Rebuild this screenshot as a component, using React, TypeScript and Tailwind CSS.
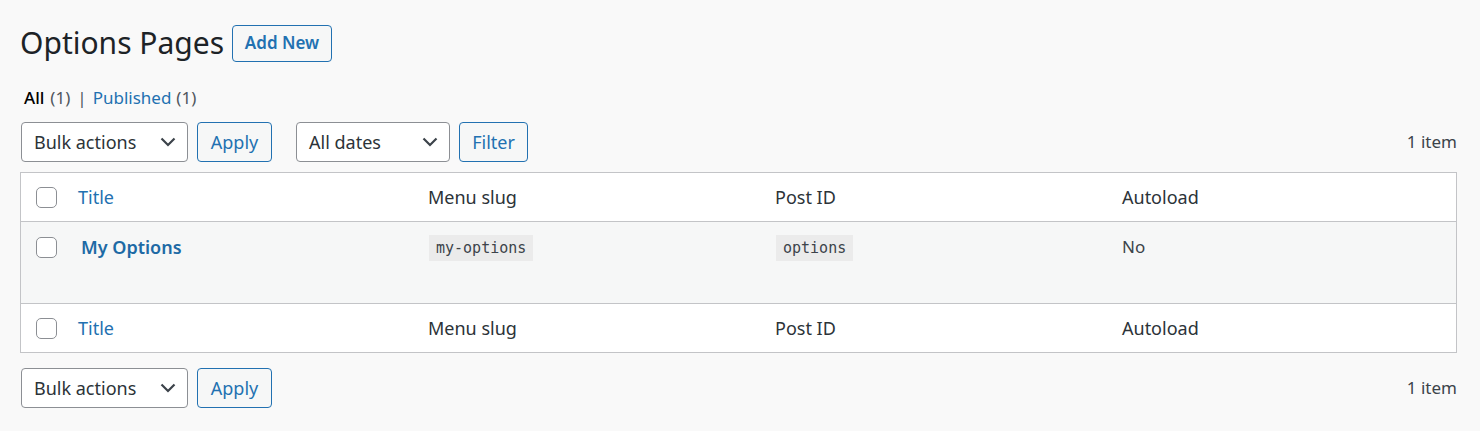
import React from "react";

function Chevron() {
  return (
    <svg width="16" height="10" viewBox="0 0 16 10" className="shrink-0">
      <path d="M1.5 1.5 L8 8 L14.5 1.5" fill="none" stroke="#3c434a" strokeWidth="2.2" />
    </svg>
  );
}

function Select({ label, width }: { label: string; width: string }) {
  return (
    <div
      className={`${width} h-[40px] flex items-center justify-between bg-white border border-[#8c8f94] rounded-[4px] pl-[12px] pr-[11px] text-[18px] text-[#2c3338]`}
    >
      <span>{label}</span>
      <Chevron />
    </div>
  );
}

function Btn({ label, width }: { label: string; width: string }) {
  return (
    <div
      className={`${width} h-[40px] flex items-center justify-center bg-[#f6f7f7] border border-[#2271b1] rounded-[4px] text-[18px] text-[#2271b1]`}
    >
      {label}
    </div>
  );
}

function Checkbox() {
  return <div className="w-[21px] h-[21px] ml-[15px] bg-white border border-[#8c8f94] rounded-[5px]" />;
}

function HeaderRow({ border }: { border: string }) {
  return (
    <div className={`grid grid-cols-[47px_350px_347px_347px_1fr] items-center text-[18px] text-[#2c3338] ${border}`}>
      <Checkbox />
      <div className="pl-[10px] text-[#2271b1]">Title</div>
      <div className="pl-[10px]">Menu slug</div>
      <div className="pl-[10px]">Post ID</div>
      <div className="pl-[10px]">Autoload</div>
    </div>
  );
}

export default function App() {
  return (
    <div className="min-h-[431px] bg-[#f9f9f9] pl-5 pr-[23px] pt-[24px] font-['Noto_Sans',sans-serif] text-[#2c3338]">
      <div className="flex items-center h-[38px] gap-[8px]">
        <h1 className="text-[30px] leading-[38px] font-normal text-[#1d2327]">Options Pages</h1>
        <div className="h-[37px] w-[100px] flex items-center justify-center border border-[#2271b1] rounded-[4px] bg-[#f6f7f7] text-[#2271b1] text-[17px] font-semibold">
          Add New
        </div>
      </div>

      <div className="mt-[23px] h-[26px] flex items-center pl-[4px] text-[17px] text-[#50575e]">
        <span className="text-black font-medium">All</span>
        <span className="ml-[6px]">(1)</span>
        <span className="ml-[7px] mr-[6px] text-[#50575e]">|</span>
        <span className="text-[#2271b1]">Published</span>
        <span className="ml-[5px]">(1)</span>
      </div>

      <div className="mt-[11px] flex items-center h-[40px]">
        <div className="ml-[1px]">
          <Select label="Bulk actions" width="w-[167px]" />
        </div>
        <div className="ml-[9px]">
          <Btn label="Apply" width="w-[75px]" />
        </div>
        <div className="ml-[24px]">
          <Select label="All dates" width="w-[154px]" />
        </div>
        <div className="ml-[9px]">
          <Btn label="Filter" width="w-[69px]" />
        </div>
        <div className="ml-auto text-[17px] text-[#3c434a]">1 item</div>
      </div>

      <div className="mt-[10px] border border-[#c3c4c7] bg-white">
        <HeaderRow border="h-[49px] border-b border-[#c3c4c7]" />
        <div className="grid grid-cols-[47px_350px_347px_347px_1fr] h-[82px] items-start bg-[#f6f7f7] border-b border-[#c3c4c7] text-[18px]">
          <div className="pt-[15px]">
            <Checkbox />
          </div>
          <div className="pl-[13px] pt-[12px] font-semibold text-[#1d6aa5]">My Options</div>
          <div className="pl-[11px] pt-[11px]">
            <span className="inline-block bg-[#ebebeb] px-[7px] h-[26px] leading-[26px] font-['DejaVu_Sans_Mono',monospace] text-[15px] text-[#3c434a]">
              my-options
            </span>
          </div>
          <div className="pl-[11px] pt-[11px]">
            <span className="inline-block bg-[#ebebeb] px-[7px] h-[26px] leading-[26px] font-['DejaVu_Sans_Mono',monospace] text-[15px] text-[#3c434a]">
              options
            </span>
          </div>
          <div className="pl-[10px] pt-[12px] text-[17px] text-[#3c434a]">No</div>
        </div>
        <HeaderRow border="h-[48px]" />
      </div>

      <div className="mt-[15px] flex items-center h-[40px]">
        <div className="ml-[1px]">
          <Select label="Bulk actions" width="w-[167px]" />
        </div>
        <div className="ml-[9px]">
          <Btn label="Apply" width="w-[75px]" />
        </div>
        <div className="ml-auto text-[17px] text-[#3c434a]">1 item</div>
      </div>
    </div>
  );
}
